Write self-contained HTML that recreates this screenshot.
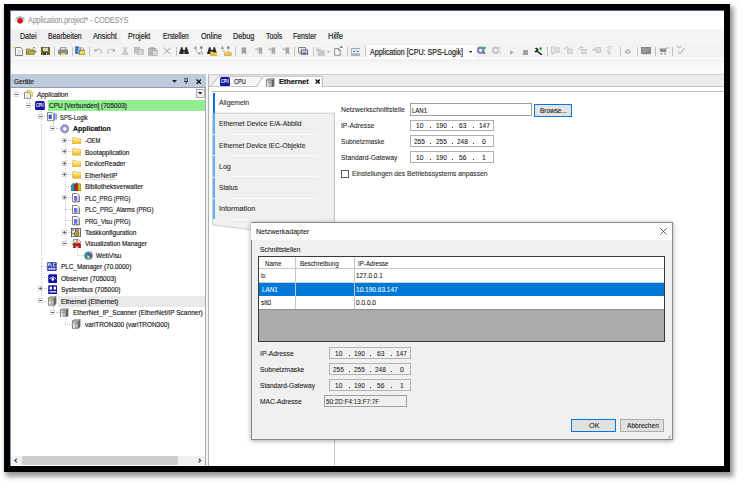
<!DOCTYPE html>
<html><head><meta charset="utf-8"><title>CODESYS</title>
<style>
html,body{margin:0;padding:0;background:#fff;}
body{width:743px;height:485px;position:relative;overflow:hidden;font-family:"Liberation Sans",sans-serif;}
.a{position:absolute;box-sizing:border-box;}
.t{position:absolute;white-space:pre;-webkit-text-stroke:.18px;line-height:12px;height:12px;transform-origin:0 50%;font-family:"Liberation Sans",sans-serif;}
#frame{position:absolute;left:4px;top:4px;width:726px;height:468px;box-sizing:border-box;border:6px solid #000;box-shadow:2px 3px 5px 1.5px rgba(0,0,0,.42);}
#clip{position:absolute;left:10px;top:10px;width:714px;height:456px;overflow:hidden;background:#fff;}
#in{position:absolute;left:-10px;top:-10px;width:743px;height:485px;}
</style></head><body>
<div id="frame"></div>
<div id="clip"><div id="in">
<div class="a" style="left:10.00px;top:10.00px;width:714.00px;height:19.00px;background:#ffffff;"></div>
<div class="a" style="left:10.00px;top:29.00px;width:714.00px;height:14.40px;background:#f0f0f0;"></div>
<div class="a" style="left:121.00px;top:29.00px;width:603.00px;height:14.40px;background:#f5f5f5;"></div>
<div class="a" style="left:10.00px;top:43.40px;width:714.00px;height:15.10px;background:#f3f3f3;"></div>
<div class="a" style="left:10.00px;top:58.50px;width:714.00px;height:16.10px;background:linear-gradient(#f1f1f1,#f9f9f9 45%,#fcfcfc);"></div>
<div class="a" style="left:10.00px;top:74.60px;width:714.00px;height:391.40px;background:#ffffff;"></div>
<svg class="a" style="left:15.20px;top:15.80px" width="10" height="8" viewBox="0 0 10 8"><path d="M5 .1 9.700 2.300V5.200L5 7.600.3 5.200V2.300z" fill="#cdd6d6"/><path d="M5 .1 9.700 2.300 5 4.200.3 2.300z" fill="#a4acac"/><circle cx="5.100" cy="4.900" r="2.700" fill="#e40a12"/></svg>
<span class="t" style="left:28.30px;top:15.25px;font-size:8.2px;color:#9a9a9a;transform:scaleX(0.8556);">Application.project* - CODESYS</span>
<span class="t" style="left:20.00px;top:30.55px;font-size:8.2px;color:#1c1c1c;transform:scaleX(0.8627);">Datei</span>
<span class="t" style="left:47.50px;top:30.55px;font-size:8.2px;color:#1c1c1c;transform:scaleX(0.8521);">Bearbeiten</span>
<span class="t" style="left:93.00px;top:30.55px;font-size:8.2px;color:#1c1c1c;transform:scaleX(0.8842);">Ansicht</span>
<span class="t" style="left:128.25px;top:30.55px;font-size:8.2px;color:#1c1c1c;transform:scaleX(0.8731);">Projekt</span>
<span class="t" style="left:163.00px;top:30.55px;font-size:8.2px;color:#1c1c1c;transform:scaleX(0.8098);">Erstellen</span>
<span class="t" style="left:200.50px;top:30.55px;font-size:8.2px;color:#1c1c1c;transform:scaleX(0.8766);">Online</span>
<span class="t" style="left:233.00px;top:30.55px;font-size:8.2px;color:#1c1c1c;transform:scaleX(0.8803);">Debug</span>
<span class="t" style="left:265.75px;top:30.55px;font-size:8.2px;color:#1c1c1c;transform:scaleX(0.8497);">Tools</span>
<span class="t" style="left:293.25px;top:30.55px;font-size:8.2px;color:#1c1c1c;transform:scaleX(0.8374);">Fenster</span>
<span class="t" style="left:328.00px;top:30.55px;font-size:8.2px;color:#1c1c1c;transform:scaleX(0.9152);">Hilfe</span>
<div class="a" style="left:54.10px;top:47.20px;width:0.60px;height:9.00px;background:#c4c4c4;"></div>
<div class="a" style="left:71.80px;top:47.20px;width:0.60px;height:9.00px;background:#c4c4c4;"></div>
<div class="a" style="left:89.00px;top:47.20px;width:0.60px;height:9.00px;background:#c4c4c4;"></div>
<div class="a" style="left:175.90px;top:47.20px;width:0.60px;height:9.00px;background:#c4c4c4;"></div>
<div class="a" style="left:235.10px;top:47.20px;width:0.60px;height:9.00px;background:#c4c4c4;"></div>
<div class="a" style="left:294.10px;top:47.20px;width:0.60px;height:9.00px;background:#c4c4c4;"></div>
<div class="a" style="left:312.60px;top:47.20px;width:0.60px;height:9.00px;background:#c4c4c4;"></div>
<div class="a" style="left:346.90px;top:47.20px;width:0.60px;height:9.00px;background:#c4c4c4;"></div>
<div class="a" style="left:365.00px;top:47.20px;width:0.60px;height:9.00px;background:#c4c4c4;"></div>
<div class="a" style="left:546.70px;top:47.20px;width:0.60px;height:9.00px;background:#c4c4c4;"></div>
<div class="a" style="left:619.70px;top:47.20px;width:0.60px;height:9.00px;background:#c4c4c4;"></div>
<div class="a" style="left:637.20px;top:47.20px;width:0.60px;height:9.00px;background:#c4c4c4;"></div>
<div class="a" style="left:654.70px;top:47.20px;width:0.60px;height:9.00px;background:#c4c4c4;"></div>
<div class="a" style="left:672.20px;top:47.20px;width:0.60px;height:9.00px;background:#c4c4c4;"></div>
<svg class="a" style="left:12.50px;top:46.00px" width="10" height="10" viewBox="0 0 10 10"><path d="M2.5 1.5h5l2 2v6h-7z" fill="#fff" stroke="#666" stroke-width=".8"/><path d="M4 4h4M4 5.4h4M4 6.8h4M4 8.2h4" stroke="#c8c8c8" stroke-width=".8"/><path d="M1.5 0 L2 1.2 3.2 1.5 2 2 1.5 3.2 1 2 0 1.5 1 1.2z" fill="#e8d020"/></svg>
<svg class="a" style="left:26.00px;top:47.00px" width="10.5" height="8" viewBox="0 0 10.5 8"><path d="M.5 7.3V2h3l1 1h3.5v1.2" fill="#d8d070" stroke="#55531a" stroke-width=".7"/><path d="M.5 7.3l2-3.3h7.5l-2 3.3z" fill="#c4bc3c" stroke="#55531a" stroke-width=".7"/><path d="M6.5 1.3c1.2-1 2.2-.8 3 .2" stroke="#333" stroke-width=".6" fill="none"/></svg>
<svg class="a" style="left:40.80px;top:46.80px" width="9" height="8.4" viewBox="0 0 9 8.4"><rect x=".4" y=".4" width="8.2" height="7.6" fill="#6e6c1c" stroke="#3e3d10" stroke-width=".6"/><rect x="2" y=".8" width="5" height="3.4" fill="#d9d9c0"/><rect x="2.4" y="5.4" width="4" height="2.6" fill="#3a3a3a"/><rect x="5" y="5.9" width="1" height="1.8" fill="#ddd"/></svg>
<svg class="a" style="left:57.80px;top:46.50px" width="10.4" height="8.8" viewBox="0 0 10.4 8.8"><path d="M2.6 3V.6h5.2V3" fill="#f4f4f4" stroke="#555" stroke-width=".6"/><rect x=".5" y="3" width="9.4" height="4" rx=".8" fill="#9a9a9a" stroke="#444" stroke-width=".6"/><rect x="2.4" y="5.6" width="5.6" height="2.8" fill="#e6dc5a" stroke="#555" stroke-width=".5"/></svg>
<svg class="a" style="left:75.00px;top:46.30px" width="10.4" height="9.2" viewBox="0 0 10.4 9.2"><rect x=".5" y=".8" width="3.2" height="6.6" fill="#3f7fd0" stroke="#1b4a94" stroke-width=".6"/><rect x="2.6" y="1.8" width="3" height="5.4" fill="#9cc0ec" stroke="#3565a8" stroke-width=".6"/><path d="M5.6 2.6c.6-1.4 2.4-1.4 3 0v1.6H5.6z" fill="#e8e8e8" stroke="#666" stroke-width=".5"/><rect x="4.6" y="4.4" width="5.4" height="4.4" fill="#f0dc50" stroke="#7a6d14" stroke-width=".6"/></svg>
<svg class="a" style="left:93.60px;top:48.40px" width="8.4" height="6" viewBox="0 0 8.4 6"><path d="M1.2 2.4C3.4.6 6.6.8 7.6 3.2 7.9 4.3 7.3 5.2 6.4 5.6" fill="none" stroke="#a8a8a8" stroke-width=".9"/><path d="M.4.6v3h3z" fill="#a8a8a8"/></svg>
<svg class="a" style="left:107.20px;top:48.40px" width="8.4" height="6" viewBox="0 0 8.4 6"><path d="M7.2 2.4C5 .6 1.8.8.8 3.2.5 4.3 1.1 5.2 2 5.6" fill="none" stroke="#a8a8a8" stroke-width=".9"/><path d="M8 .6v3h-3z" fill="#a8a8a8"/></svg>
<svg class="a" style="left:121.80px;top:46.80px" width="6.4" height="8.6" viewBox="0 0 6.4 8.6"><path d="M1.4 0 4.2 5.4M5 0 2.2 5.4" stroke="#a6a6a6" stroke-width=".8" fill="none"/><circle cx="1.6" cy="6.8" r="1.2" fill="none" stroke="#a6a6a6" stroke-width=".8"/><circle cx="4.8" cy="6.8" r="1.2" fill="none" stroke="#a6a6a6" stroke-width=".8"/></svg>
<svg class="a" style="left:134.20px;top:46.80px" width="9.8" height="8.6" viewBox="0 0 9.8 8.6"><rect x=".4" y=".4" width="5" height="5.6" fill="#c4c4c4" stroke="#a4a4a4" stroke-width=".6"/><rect x="3.8" y="2.4" width="5.4" height="5.8" fill="#d2d2d2" stroke="#a4a4a4" stroke-width=".6"/></svg>
<svg class="a" style="left:148.20px;top:46.60px" width="10" height="9" viewBox="0 0 10 9"><rect x=".4" y="1.2" width="7.6" height="7" fill="#b8b8b8" stroke="#a0a0a0" stroke-width=".6"/><rect x="2.4" y=".3" width="3.6" height="1.8" fill="#a0a0a0"/><rect x="4.4" y="3.6" width="5" height="5" fill="#d6d6d6" stroke="#a8a8a8" stroke-width=".6"/></svg>
<svg class="a" style="left:163.00px;top:47.20px" width="8.2" height="7.8" viewBox="0 0 8.2 7.8"><path d="M.6.6 7.6 7.2M7.6.6.6 7.2" stroke="#a2a2a2" stroke-width="1" fill="none"/></svg>
<svg class="a" style="left:179.30px;top:46.80px" width="10" height="7.6" viewBox="0 0 10 7.6"><path d="M1.900.3h1.600l.3 2.300 1 3.800c.1.700-.2 1-.8 1H.9c-.600 0-.9-.3-.8-1l1.300-3.800z" fill="#262626"/><path d="M6.500.3h1.600l.5 2.300 1.300 3.800c.1.700-.2 1-.8 1H6c-.600 0-.9-.3-.8-1l1-3.800z" fill="#262626"/><rect x="4" y="2.800" width="2" height="1.800" fill="#262626"/></svg>
<svg class="a" style="left:193.60px;top:46.20px" width="10" height="9.6" viewBox="0 0 10 9.6"><path d="M2.2 3.6c-.6 2 .8 3.400 2.600 3.800M6.6 2.200c1.200 1 1.400 2.400.6 3.800" fill="none" stroke="#8a8a8a" stroke-width=".7" stroke-dasharray="1 .6"/><path d="M.3 3.200 1.400.500 2.500 3.200M.8 2.300h1.300" stroke="#666" stroke-width=".6" fill="none"/><path d="M6.600.4v2.200M6.600.5h1c.8 0 .8 1 0 1h-1M6.600 1.500h1.100c.9 0 .9 1.100 0 1.100h-1.100" stroke="#555" stroke-width=".5" fill="none"/><path d="M4.4 6.600l1.600.8-1.600.8z" fill="#555"/></svg>
<svg class="a" style="left:199.40px;top:51.60px" width="4" height="3.8" viewBox="0 0 4 3.8"><rect x=".3" y=".3" width="3.2" height="3.2" fill="#ddd" stroke="#999" stroke-width=".5"/></svg>
<svg class="a" style="left:206.70px;top:46.80px" width="10" height="7.6" viewBox="0 0 10 7.6"><path d="M1.900.3h1.600l.3 2.300 1 3.800c.1.700-.2 1-.8 1H.9c-.600 0-.9-.3-.8-1l1.300-3.800z" fill="#262626"/><path d="M6.500.3h1.600l.5 2.300 1.300 3.800c.1.700-.2 1-.8 1H6c-.600 0-.9-.3-.8-1l1-3.800z" fill="#262626"/><rect x="4" y="2.800" width="2" height="1.800" fill="#262626"/></svg>
<svg class="a" style="left:209.70px;top:50.80px" width="7.6" height="4.8" viewBox="0 0 7.6 4.8"><defs><linearGradient id="fg" x1="0" y1="0" x2="0" y2="1"><stop offset="0" stop-color="#fbe88a"/><stop offset="1" stop-color="#eca818"/></linearGradient></defs><path d="M.3 4.5V.8h2.4l.6.7h4v3z" fill="url(#fg)" stroke="#b48a14" stroke-width=".4"/></svg>
<svg class="a" style="left:221.20px;top:46.20px" width="10" height="9.6" viewBox="0 0 10 9.6"><path d="M2.2 3.6c-.6 2 .8 3.400 2.600 3.800M6.6 2.200c1.200 1 1.400 2.400.6 3.800" fill="none" stroke="#8a8a8a" stroke-width=".7" stroke-dasharray="1 .6"/><path d="M.3 3.200 1.400.500 2.500 3.200M.8 2.300h1.300" stroke="#666" stroke-width=".6" fill="none"/><path d="M6.600.4v2.200M6.600.5h1c.8 0 .8 1 0 1h-1M6.600 1.500h1.100c.9 0 .9 1.100 0 1.100h-1.100" stroke="#555" stroke-width=".5" fill="none"/><path d="M4.4 6.600l1.600.8-1.600.8z" fill="#555"/></svg>
<svg class="a" style="left:224.40px;top:50.80px" width="7.6" height="4.8" viewBox="0 0 7.6 4.8"><defs><linearGradient id="fg" x1="0" y1="0" x2="0" y2="1"><stop offset="0" stop-color="#fbe88a"/><stop offset="1" stop-color="#eca818"/></linearGradient></defs><path d="M.3 4.5V.8h2.4l.6.7h4v3z" fill="url(#fg)" stroke="#b48a14" stroke-width=".4"/></svg>
<svg class="a" style="left:241.00px;top:46.80px" width="6" height="8.4" viewBox="0 0 6 8.4"><path d="M.6.4h4.6v7.4L2.9 5.6.6 7.8z" fill="#9e9e9e"/></svg>
<svg class="a" style="left:255.20px;top:46.80px" width="8" height="8.4" viewBox="0 0 8 8.4"><path d="M3.6.6h3.6v7.2L5.4 6 3.6 7.8z" fill="#a8a8a8"/><path d="M0 2.2h3M1.8.8 3.2 2.2 1.8 3.6" stroke="#a0a0a0" stroke-width=".7" fill="none"/></svg>
<svg class="a" style="left:268.20px;top:46.80px" width="8" height="8.4" viewBox="0 0 8 8.4"><path d="M3.6.6h3.6v7.2L5.4 6 3.6 7.8z" fill="#a8a8a8"/><path d="M0 2.2h3M1.8.8 3.2 2.2 1.8 3.6" stroke="#a0a0a0" stroke-width=".7" fill="none"/></svg>
<svg class="a" style="left:281.80px;top:46.80px" width="8" height="8.4" viewBox="0 0 8 8.4"><path d="M3.6.6h3.6v7.2L5.4 6 3.6 7.8z" fill="#a8a8a8"/><path d="M0 2.2h3M1.8.8 3.2 2.2 1.8 3.6" stroke="#a0a0a0" stroke-width=".7" fill="none"/></svg>
<svg class="a" style="left:298.20px;top:46.80px" width="10.2" height="8.6" viewBox="0 0 10.2 8.6"><rect x=".4" y=".4" width="7.4" height="5.6" rx=".8" fill="#e8e8e8" stroke="#444" stroke-width=".7"/><rect x="3.2" y="3" width="6.4" height="5" fill="#c8d4ea" stroke="#333" stroke-width=".7"/><rect x="4.6" y="5.6" width="3.6" height="1.6" fill="#3a5fb4"/></svg>
<svg class="a" style="left:316.30px;top:46.80px" width="9.2" height="8.8" viewBox="0 0 9.2 8.8"><path d="M.6 2.2h4v1.6h3.8v4.6H2.2V3.8H.6z" fill="#d0d0d0" stroke="#b0b0b0" stroke-width=".6"/><path d="M3.2 5h4M3.2 6.4h4" stroke="#b0b0b0" stroke-width=".5"/><path d="M1.2 0 1.6 1 2.6 1.2 1.6 1.6 1.2 2.6.8 1.6 0 1.2.8 1z" fill="#bbb"/></svg>
<svg class="a" style="left:326.80px;top:50.60px" width="3" height="2" viewBox="0 0 3 2"><path d="M0 0h3L1.5 1.8z" fill="#999"/></svg>
<svg class="a" style="left:333.60px;top:46.20px" width="9" height="9.6" viewBox="0 0 9 9.6"><path d="M.7 2.600h3.800l1.700 1.700v4.900H.7z" fill="#fff" stroke="#3a3a3a" stroke-width=".6"/><path d="M4.500 2.600v1.700h1.700" fill="none" stroke="#3a3a3a" stroke-width=".5"/><path d="M5.600 2c.5-1 1.300-1.300 2.200-1" stroke="#333" stroke-width=".6" fill="none"/><path d="M7.300.2l1.300 1.300-1.700.3z" fill="#222"/></svg>
<svg class="a" style="left:350.60px;top:46.60px" width="9.6" height="9.2" viewBox="0 0 9.6 9.2"><rect x=".4" y="1.600" width="8.800" height="7" fill="#f4f7fc" stroke="#8a8a8a" stroke-width=".6"/><path d="M1.200 1v1.200M2.600 1v1.200M4 1v1.200M5.400 1v1.200M6.800 1v1.200M8.200 1v1.200" stroke="#7a9ae0" stroke-width=".7"/><path d="M2.200 4.400h1.800M5.600 4.400h1.800" stroke="#2a50c8" stroke-width="1.300"/><rect x=".7" y="6.200" width="8.200" height="2.200" fill="#b4b4b4"/></svg>
<div class="a" style="left:367.00px;top:44.80px;width:107.50px;height:13.40px;background:#fcfcfc;"></div>
<span class="t" style="left:369.50px;top:47.05px;font-size:8.2px;color:#1a1a1a;transform:scaleX(0.8659);">Application [CPU: SPS-Logik]</span>
<svg class="a" style="left:469.30px;top:50.50px" width="3.2" height="2" viewBox="0 0 3.2 2"><path d="M0 0h3.200L1.600 1.900z" fill="#222"/></svg>
<svg class="a" style="left:477.30px;top:46.40px" width="9.6" height="9.6" viewBox="0 0 9.6 9.6"><circle cx="3.600" cy="4.200" r="2.500" fill="#fff" stroke="#7c88c6" stroke-width="1.900"/><circle cx="3.600" cy="4.200" r="3.500" fill="none" stroke="#4a568e" stroke-width=".4"/><path d="M6.200 6.200l2.200.6-1.400 1.600z" fill="#222"/><path d="M6.800 4.800v2" stroke="#333" stroke-width=".5"/><circle cx="7.500" cy="1.900" r="1.300" fill="#22c022"/></svg>
<svg class="a" style="left:491.60px;top:46.40px" width="9.6" height="9.6" viewBox="0 0 9.6 9.6"><circle cx="3.600" cy="4.200" r="2.500" fill="#fff" stroke="#c4c4c4" stroke-width="1.900"/><circle cx="3.600" cy="4.200" r="3.500" fill="none" stroke="#b0b0b0" stroke-width=".4"/><path d="M6.200 1.200h2.400v6.400H6.200z" fill="#e8e8e8" stroke="#c0c0c0" stroke-width=".4"/></svg>
<svg class="a" style="left:510.30px;top:50.10px" width="3.6" height="5" viewBox="0 0 3.6 5"><path d="M.2.200 3.400 2.500.2 4.800z" fill="#a4a4a4"/></svg>
<div class="a" style="left:522.90px;top:50.40px;width:5.10px;height:4.70px;background:#a2a2a2;"></div>
<svg class="a" style="left:533.60px;top:46.60px" width="9.4" height="8.8" viewBox="0 0 9.4 8.8"><path d="M1 1.6 2.4.4 4.6 2.6 4 4l4.4 3.6-.9 1L3 5 1.6 5.6.2 4 2 3.8 2.6 3z" fill="#1e1e1e"/><circle cx="6.6" cy="1.6" r="1.4" fill="#18b018"/></svg>
<svg class="a" style="left:550.50px;top:46.40px" width="9" height="9.2" viewBox="0 0 9 9.2"><path d="M.8.8h2.4M.8.8v6.4M.8 7.2h2.4" stroke="#b4b4b4" stroke-width=".8" fill="none"/><rect x="3.6" y="1.8" width="4.8" height="4.4" fill="#dcdcdc" stroke="#b4b4b4" stroke-width=".5"/><path d="M.2 7.4h2.2L1.3 8.8z" fill="#b4b4b4"/></svg>
<svg class="a" style="left:563.80px;top:46.40px" width="9" height="9.2" viewBox="0 0 9 9.2"><path d="M4.6 2.2C3.4.4 1.2.6.8 2.6" stroke="#b4b4b4" stroke-width=".8" fill="none"/><path d="M0 2h2L1 3.6z" fill="#b4b4b4"/><rect x="3.6" y="3" width="4.8" height="4.4" fill="#dcdcdc" stroke="#b4b4b4" stroke-width=".5"/></svg>
<svg class="a" style="left:577.50px;top:46.40px" width="9" height="9.2" viewBox="0 0 9 9.2"><path d="M.8 3.6C.8 1.2 3 .6 4.4 1.6" stroke="#b4b4b4" stroke-width=".8" fill="none"/><path d="M3.8.4 5.6 1.6 3.8 2.8z" fill="#b4b4b4"/><rect x="3.6" y="3.4" width="4.8" height="4.2" fill="#dcdcdc" stroke="#b4b4b4" stroke-width=".5"/></svg>
<svg class="a" style="left:591.60px;top:46.40px" width="9" height="9.2" viewBox="0 0 9 9.2"><path d="M.2 3.6h3M2 2.2 3.4 3.6 2 5" stroke="#b4b4b4" stroke-width=".8" fill="none"/><rect x="4.2" y="1.4" width="4.4" height="5.4" fill="#dcdcdc" stroke="#b4b4b4" stroke-width=".5"/></svg>
<svg class="a" style="left:605.60px;top:46.40px" width="9" height="9.2" viewBox="0 0 9 9.2"><path d="M1.2 1.6C2.4-.2 5.2.2 4.8 2.2 4.4 3.6 1.4 3.4 1.6 5.2 1.8 7 4.6 7 5 5.6" stroke="#b4b4b4" stroke-width=".8" fill="none"/><path d="M2 8.6h2.4L3.2 7z" fill="#b4b4b4"/></svg>
<svg class="a" style="left:624.60px;top:48.60px" width="6" height="5.4" viewBox="0 0 6 5.4"><path d="M.4 1.8h2.4V.4L5.6 2.7 2.8 5V3.6H.4z" fill="#e8e8e8" stroke="#8c8c8c" stroke-width=".7"/></svg>
<svg class="a" style="left:640.60px;top:46.60px" width="10.4" height="8.8" viewBox="0 0 10.4 8.8"><rect x=".4" y=".4" width="9.4" height="6.2" fill="#8c8c8c" stroke="#6a6a6a" stroke-width=".6"/><path d="M1 6 9 1M1 3.2 5 1" stroke="#c0c0c0" stroke-width=".6"/><path d="M2 8h6.4" stroke="#8c8c8c" stroke-width=".9" stroke-dasharray="1 .5"/></svg>
<svg class="a" style="left:658.60px;top:47.40px" width="9.6" height="8" viewBox="0 0 9.6 8"><path d="M.4 1.6h6.8V5H1.6z" fill="#8a8a8a"/><path d="M7 1.6 9.2.4" stroke="#8a8a8a" stroke-width=".8"/><circle cx="2.4" cy="6.6" r=".9" fill="#8a8a8a"/><circle cx="6" cy="6.6" r=".9" fill="#8a8a8a"/></svg>
<svg class="a" style="left:676.00px;top:46.40px" width="9.2" height="9" viewBox="0 0 9.2 9"><path d="M.4 1h4.2M3.4.2 4.8 1 3.4 2" stroke="#a8a8a8" stroke-width=".7" fill="none"/><path d="M2 5.4 4 8 8.4 2.2" stroke="#a0a0a0" stroke-width=".9" fill="none"/></svg>
<div class="a" style="left:10.00px;top:74.30px;width:195.60px;height:13.20px;background:#bdcbdc;"></div>
<div class="a" style="left:10.00px;top:87.40px;width:195.60px;height:0.70px;background:#8e9aac;"></div>
<span class="t" style="left:14.00px;top:75.85px;font-size:7.5px;color:#1e1e1e;transform:scaleX(0.8676);">Geräte</span>
<svg class="a" style="left:171.60px;top:80.00px" width="5" height="3" viewBox="0 0 5 3"><path d="M0 0h5L2.5 2.8z" fill="#1e1e1e"/></svg>
<svg class="a" style="left:183.80px;top:78.40px" width="4.4" height="6.2" viewBox="0 0 4.4 6.2"><rect x=".9" y=".4" width="2.6" height="3" fill="#bdcbdc" stroke="#222" stroke-width=".7"/><path d="M.2 3.6h4M2.2 3.6v2.4" stroke="#222" stroke-width=".7"/></svg>
<svg class="a" style="left:195.60px;top:78.80px" width="5.6" height="5.4" viewBox="0 0 5.6 5.4"><path d="M.5.5 5 4.9M5 .5.5 4.9" stroke="#111" stroke-width="1.3"/></svg>
<div class="a" style="left:204.80px;top:87.60px;width:0.80px;height:378.40px;background:#a8a8a8;"></div>
<div class="a" style="left:205.60px;top:74.60px;width:2.40px;height:391.40px;background:#f4f4f4;"></div>
<div class="a" style="left:10.00px;top:10.00px;width:0.70px;height:456.00px;background:#8492b4;"></div>
<div class="a" style="left:10.00px;top:10.00px;width:714.00px;height:0.80px;background:#4c68a2;"></div>
<div class="a" style="left:196.00px;top:88.60px;width:8.60px;height:9.60px;background:#ececec;border:.6px solid #adadad;"></div>
<svg class="a" style="left:198.20px;top:92.40px" width="4.4" height="2.6" viewBox="0 0 4.4 2.6"><path d="M0 0h4.4L2.2 2.4z" fill="#222"/></svg>
<div class="a" style="left:10.60px;top:455.60px;width:194.20px;height:9.80px;background:#f0f0f0;"></div>
<div class="a" style="left:22.00px;top:455.60px;width:156.40px;height:9.80px;background:#cdcdcd;"></div>
<svg class="a" style="left:13.60px;top:458.00px" width="3.6" height="5" viewBox="0 0 3.6 5"><path d="M2.800.700.900 2.500 2.800 4.300" stroke="#444" stroke-width="1.200" fill="none"/></svg>
<svg class="a" style="left:197.60px;top:458.00px" width="3.6" height="5" viewBox="0 0 3.6 5"><path d="M.8.700 2.700 2.500.8 4.300" stroke="#444" stroke-width="1.200" fill="none"/></svg>
<div class="a" style="left:48.40px;top:100.00px;width:156.40px;height:11.10px;background:#90ee90;"></div>
<div class="a" style="left:58.40px;top:295.85px;width:146.40px;height:11.20px;background:#e9e9e9;"></div>
<svg class="a" style="left:13.90px;top:91.80px" width="5.2" height="5" viewBox="0 0 5.2 5"><rect x=".35" y=".35" width="4.5" height="4.3" fill="#fff" stroke="#b4c0c0" stroke-width=".6"/><path d="M1 2.500h3.200" stroke="#5a5a5a" stroke-width=".95"/></svg>
<div class="a" style="left:19.60px;top:94.00px;width:5.40px;height:0.60px;border-top:.6px dotted #cacaca;"></div>
<svg class="a" style="left:24.40px;top:90.10px" width="9" height="9.2" viewBox="0 0 9 9.2"><path d="M2.800.5h3.200c1.600.3 2.600 1.600 2.600 3.200v2.600H5.400z" fill="#f2e270" stroke="#a89a30" stroke-width=".5"/><path d="M.5 2.400h4l2 2v4.300H.5z" fill="#fff" stroke="#5a5a5a" stroke-width=".7"/><path d="M1.600 4.600h3.600M1.600 6h3.600M1.600 7.400h3.600" stroke="#c0c0c0" stroke-width=".6"/></svg>
<span class="t" style="left:36.90px;top:89.15px;font-size:7.5px;color:#1e1e1e;font-style:italic;transform:scaleX(0.8473);">Application</span>
<div class="a" style="left:29.00px;top:99.90px;width:0.60px;height:2.97px;border-left:.6px dotted #cacaca;"></div>
<svg class="a" style="left:25.95px;top:102.78px" width="5.2" height="5" viewBox="0 0 5.2 5"><rect x=".35" y=".35" width="4.5" height="4.3" fill="#fff" stroke="#b4c0c0" stroke-width=".6"/><path d="M1 2.500h3.200" stroke="#5a5a5a" stroke-width=".95"/></svg>
<svg class="a" style="left:35.00px;top:100.77px" width="9.8" height="9.4" viewBox="0 0 9.8 9.4"><rect x="0" y="0" width="9.8" height="9.4" rx="2" fill="#1414a4"/><text x="4.9" y="6.2" font-family="Liberation Sans" font-size="4.6" font-weight="bold" fill="#fff" text-anchor="middle" textLength="7.800000000000001" lengthAdjust="spacingAndGlyphs">CPU</text></svg>
<span class="t" style="left:49.20px;top:100.42px;font-size:7.5px;color:#1e1e1e;transform:scaleX(0.8620);">CPU [Verbunden] (705003)</span>
<div class="a" style="left:41.20px;top:110.88px;width:0.60px;height:187.57px;border-left:.6px dotted #cacaca;"></div>
<div class="a" style="left:31.60px;top:104.97px;width:3.40px;height:0.60px;border-top:.6px dotted #cacaca;"></div>
<svg class="a" style="left:38.00px;top:113.85px" width="5.2" height="5" viewBox="0 0 5.2 5"><rect x=".35" y=".35" width="4.5" height="4.3" fill="#fff" stroke="#b4c0c0" stroke-width=".6"/><path d="M1 2.500h3.200" stroke="#5a5a5a" stroke-width=".95"/></svg>
<div class="a" style="left:43.80px;top:116.05px;width:3.20px;height:0.60px;border-top:.6px dotted #cacaca;"></div>
<svg class="a" style="left:47.20px;top:112.35px" width="10.4" height="9.2" viewBox="0 0 10.4 9.2"><path d="M.5.5h4.6l1.6 1.6v6.6H.5z" fill="#fff" stroke="#555" stroke-width=".7"/><rect x="1.6" y="2.6" width="3.2" height="4.4" fill="#3a5ad0"/><path d="M7.6 1v7.4M9.2 1.6v6" stroke="#5a78e8" stroke-width="1.1"/></svg>
<span class="t" style="left:60.40px;top:111.60px;font-size:7.5px;color:#1e1e1e;transform:scaleX(0.7817);">SPS-Logik</span>
<div class="a" style="left:53.20px;top:121.95px;width:0.60px;height:3.87px;border-left:.6px dotted #cacaca;"></div>
<div class="a" style="left:55.60px;top:127.92px;width:4.00px;height:0.60px;border-top:.6px dotted #cacaca;"></div>
<svg class="a" style="left:50.05px;top:125.72px" width="5.2" height="5" viewBox="0 0 5.2 5"><rect x=".35" y=".35" width="4.5" height="4.3" fill="#fff" stroke="#b4c0c0" stroke-width=".6"/><path d="M1 2.500h3.200" stroke="#5a5a5a" stroke-width=".95"/></svg>
<svg class="a" style="left:59.80px;top:124.02px" width="9.6" height="9.6" viewBox="0 0 9.6 9.6"><circle cx="4.8" cy="4.8" r="3.100" fill="#fff" stroke="#9696d2" stroke-width="2.500"/><circle cx="4.8" cy="4.8" r="4.400" fill="none" stroke="#6a6a8e" stroke-width=".45" stroke-dasharray="1.500 .8"/></svg>
<span class="t" style="left:73.00px;top:123.37px;font-size:7.5px;color:#111;font-weight:bold;transform:scaleX(0.9255);">Application</span>
<div class="a" style="left:65.00px;top:133.82px;width:0.60px;height:106.85px;border-left:.6px dotted #cacaca;"></div>
<svg class="a" style="left:62.10px;top:137.70px" width="5.2" height="5" viewBox="0 0 5.2 5"><rect x=".35" y=".35" width="4.5" height="4.3" fill="#fff" stroke="#b4c0c0" stroke-width=".6"/><path d="M1 2.500h3.200" stroke="#5a5a5a" stroke-width=".95"/><path d="M2.600 1v3" stroke="#5a5a5a" stroke-width=".8"/></svg>
<div class="a" style="left:67.80px;top:139.90px;width:3.20px;height:0.60px;border-top:.6px dotted #cacaca;"></div>
<svg class="a" style="left:71.60px;top:136.60px" width="9.4" height="7.6" viewBox="0 0 9.4 7.6"><defs><linearGradient id="fo" x1="0" y1="0" x2="0" y2="1"><stop offset="0" stop-color="#fff0a0"/><stop offset=".45" stop-color="#fbd850"/><stop offset="1" stop-color="#eebc34"/></linearGradient></defs><path d="M.4 6.400V1.500C.4.900.9.400 1.500.400h2c.5 0 .8.200 1 .600l.4.700h3.200c.5 0 .9.400.9.900v3.800c0 .5-.4.800-.8.800H1.200c-.5 0-.8-.3-.8-.8z" fill="url(#fo)" stroke="#c09428" stroke-width=".5"/><path d="M1.200 2.600h7" stroke="#fffbe0" stroke-width=".7" opacity=".9"/></svg>
<span class="t" style="left:84.60px;top:135.35px;font-size:7.5px;color:#1e1e1e;transform:scaleX(0.7911);">-OEM</span>
<svg class="a" style="left:62.10px;top:149.18px" width="5.2" height="5" viewBox="0 0 5.2 5"><rect x=".35" y=".35" width="4.5" height="4.3" fill="#fff" stroke="#b4c0c0" stroke-width=".6"/><path d="M1 2.500h3.200" stroke="#5a5a5a" stroke-width=".95"/><path d="M2.600 1v3" stroke="#5a5a5a" stroke-width=".8"/></svg>
<div class="a" style="left:67.80px;top:151.38px;width:3.20px;height:0.60px;border-top:.6px dotted #cacaca;"></div>
<svg class="a" style="left:71.60px;top:148.07px" width="9.4" height="7.6" viewBox="0 0 9.4 7.6"><defs><linearGradient id="fo" x1="0" y1="0" x2="0" y2="1"><stop offset="0" stop-color="#fff0a0"/><stop offset=".45" stop-color="#fbd850"/><stop offset="1" stop-color="#eebc34"/></linearGradient></defs><path d="M.4 6.400V1.500C.4.900.9.400 1.500.400h2c.5 0 .8.200 1 .600l.4.700h3.200c.5 0 .9.400.9.900v3.800c0 .5-.4.800-.8.800H1.200c-.5 0-.8-.3-.8-.8z" fill="url(#fo)" stroke="#c09428" stroke-width=".5"/><path d="M1.200 2.600h7" stroke="#fffbe0" stroke-width=".7" opacity=".9"/></svg>
<span class="t" style="left:84.60px;top:146.83px;font-size:7.5px;color:#1e1e1e;transform:scaleX(0.8675);">Bootapplication</span>
<svg class="a" style="left:62.10px;top:160.65px" width="5.2" height="5" viewBox="0 0 5.2 5"><rect x=".35" y=".35" width="4.5" height="4.3" fill="#fff" stroke="#b4c0c0" stroke-width=".6"/><path d="M1 2.500h3.200" stroke="#5a5a5a" stroke-width=".95"/><path d="M2.600 1v3" stroke="#5a5a5a" stroke-width=".8"/></svg>
<div class="a" style="left:67.80px;top:162.85px;width:3.20px;height:0.60px;border-top:.6px dotted #cacaca;"></div>
<svg class="a" style="left:71.60px;top:159.55px" width="9.4" height="7.6" viewBox="0 0 9.4 7.6"><defs><linearGradient id="fo" x1="0" y1="0" x2="0" y2="1"><stop offset="0" stop-color="#fff0a0"/><stop offset=".45" stop-color="#fbd850"/><stop offset="1" stop-color="#eebc34"/></linearGradient></defs><path d="M.4 6.400V1.500C.4.900.9.400 1.500.400h2c.5 0 .8.200 1 .600l.4.700h3.200c.5 0 .9.400.9.900v3.800c0 .5-.4.800-.8.800H1.200c-.5 0-.8-.3-.8-.8z" fill="url(#fo)" stroke="#c09428" stroke-width=".5"/><path d="M1.200 2.600h7" stroke="#fffbe0" stroke-width=".7" opacity=".9"/></svg>
<span class="t" style="left:84.60px;top:158.30px;font-size:7.5px;color:#1e1e1e;transform:scaleX(0.8500);">DeviceReader</span>
<svg class="a" style="left:62.10px;top:172.13px" width="5.2" height="5" viewBox="0 0 5.2 5"><rect x=".35" y=".35" width="4.5" height="4.3" fill="#fff" stroke="#b4c0c0" stroke-width=".6"/><path d="M1 2.500h3.200" stroke="#5a5a5a" stroke-width=".95"/><path d="M2.600 1v3" stroke="#5a5a5a" stroke-width=".8"/></svg>
<div class="a" style="left:67.80px;top:174.33px;width:3.20px;height:0.60px;border-top:.6px dotted #cacaca;"></div>
<svg class="a" style="left:71.60px;top:171.03px" width="9.4" height="7.6" viewBox="0 0 9.4 7.6"><defs><linearGradient id="fo" x1="0" y1="0" x2="0" y2="1"><stop offset="0" stop-color="#fff0a0"/><stop offset=".45" stop-color="#fbd850"/><stop offset="1" stop-color="#eebc34"/></linearGradient></defs><path d="M.4 6.400V1.500C.4.900.9.400 1.500.400h2c.5 0 .8.200 1 .600l.4.700h3.200c.5 0 .9.400.9.900v3.800c0 .5-.4.800-.8.800H1.200c-.5 0-.8-.3-.8-.8z" fill="url(#fo)" stroke="#c09428" stroke-width=".5"/><path d="M1.200 2.600h7" stroke="#fffbe0" stroke-width=".7" opacity=".9"/></svg>
<span class="t" style="left:84.60px;top:169.78px;font-size:7.5px;color:#1e1e1e;transform:scaleX(0.8831);text-decoration:underline dotted #b4b4b4;text-decoration-thickness:.5px;">EtherNetIP</span>
<div class="a" style="left:65.20px;top:185.80px;width:5.80px;height:0.60px;border-top:.6px dotted #cacaca;"></div>
<svg class="a" style="left:71.00px;top:181.60px" width="10.4" height="9.6" viewBox="0 0 10.4 9.6"><path d="M.4 9.200V3.200L2.400 1.200l1.600 1v7z" fill="#18a0a8" stroke="#0a3a40" stroke-width=".5"/><path d="M3.800 9.200V2.200L5.600.8l1.400 1.200v7.200z" fill="#e01818" stroke="#500808" stroke-width=".5"/><path d="M6.800 9.200V2.600L8.600 1.400l1.400 1v6.800z" fill="#c8c020" stroke="#4a4808" stroke-width=".5"/></svg>
<span class="t" style="left:84.60px;top:181.25px;font-size:7.5px;color:#1e1e1e;transform:scaleX(0.8695);">Bibliotheksverwalter</span>
<svg class="a" style="left:62.10px;top:195.08px" width="5.2" height="5" viewBox="0 0 5.2 5"><rect x=".35" y=".35" width="4.5" height="4.3" fill="#fff" stroke="#b4c0c0" stroke-width=".6"/><path d="M1 2.500h3.200" stroke="#5a5a5a" stroke-width=".95"/><path d="M2.600 1v3" stroke="#5a5a5a" stroke-width=".8"/></svg>
<div class="a" style="left:67.80px;top:197.28px;width:3.20px;height:0.60px;border-top:.6px dotted #cacaca;"></div>
<svg class="a" style="left:72.20px;top:193.07px" width="8.6" height="9.8" viewBox="0 0 8.6 9.8"><path d="M1 1.200h4.800l2 2v6H1z" fill="#888"/><path d="M.5.500h4.600l2 2v6.200H.5z" fill="#fff" stroke="#4a4a4a" stroke-width=".7"/><path d="M2 3h2.600l.8.800v4H2z" fill="#6c6cf6"/></svg>
<span class="t" style="left:84.60px;top:192.73px;font-size:7.5px;color:#1e1e1e;transform:scaleX(0.7779);">PLC_PRG (PRG)</span>
<div class="a" style="left:65.20px;top:208.75px;width:5.80px;height:0.60px;border-top:.6px dotted #cacaca;"></div>
<svg class="a" style="left:72.20px;top:204.55px" width="8.6" height="9.8" viewBox="0 0 8.6 9.8"><path d="M1 1.200h4.800l2 2v6H1z" fill="#888"/><path d="M.5.500h4.600l2 2v6.200H.5z" fill="#fff" stroke="#4a4a4a" stroke-width=".7"/><path d="M2 3h2.600l.8.800v4H2z" fill="#6c6cf6"/></svg>
<span class="t" style="left:84.60px;top:204.20px;font-size:7.5px;color:#1e1e1e;transform:scaleX(0.7967);">PLC_PRG_Alarms (PRG)</span>
<div class="a" style="left:65.20px;top:220.22px;width:5.80px;height:0.60px;border-top:.6px dotted #cacaca;"></div>
<svg class="a" style="left:72.20px;top:216.02px" width="8.6" height="9.8" viewBox="0 0 8.6 9.8"><path d="M1 1.200h4.800l2 2v6H1z" fill="#888"/><path d="M.5.500h4.600l2 2v6.200H.5z" fill="#fff" stroke="#4a4a4a" stroke-width=".7"/><path d="M2 3h2.600l.8.800v4H2z" fill="#6c6cf6"/></svg>
<span class="t" style="left:84.60px;top:215.68px;font-size:7.5px;color:#1e1e1e;transform:scaleX(0.7798);">PRG_Visu (PRG)</span>
<svg class="a" style="left:62.10px;top:229.50px" width="5.2" height="5" viewBox="0 0 5.2 5"><rect x=".35" y=".35" width="4.5" height="4.3" fill="#fff" stroke="#b4c0c0" stroke-width=".6"/><path d="M1 2.500h3.200" stroke="#5a5a5a" stroke-width=".95"/><path d="M2.600 1v3" stroke="#5a5a5a" stroke-width=".8"/></svg>
<div class="a" style="left:67.80px;top:231.70px;width:3.20px;height:0.60px;border-top:.6px dotted #cacaca;"></div>
<svg class="a" style="left:71.20px;top:227.70px" width="10" height="9.4" viewBox="0 0 10 9.4"><rect x=".4" y=".5" width="9" height="8.300" fill="#ececec" stroke="#2e2e2e" stroke-width=".7"/><rect x="1.400" y="1.400" width="1.600" height="1.600" fill="#20b020"/><rect x="4" y="1.200" width="1.400" height="2" fill="#c01818"/><rect x="6.400" y="1.200" width="1.400" height="2" fill="#c01818"/><circle cx="5.600" cy="5.800" r="2.300" fill="#d2cc28" stroke="#2e2e10" stroke-width=".7"/><circle cx="5.600" cy="5.800" r=".8" fill="#4a4a18"/><path d="M1.200 5.200 3 6.200" stroke="#222" stroke-width=".7"/></svg>
<span class="t" style="left:84.60px;top:227.15px;font-size:7.5px;color:#1e1e1e;transform:scaleX(0.8805);">Taskkonfiguration</span>
<svg class="a" style="left:62.10px;top:240.57px" width="5.2" height="5" viewBox="0 0 5.2 5"><rect x=".35" y=".35" width="4.5" height="4.3" fill="#fff" stroke="#b4c0c0" stroke-width=".6"/><path d="M1 2.500h3.200" stroke="#5a5a5a" stroke-width=".95"/></svg>
<div class="a" style="left:67.80px;top:242.77px;width:3.20px;height:0.60px;border-top:.6px dotted #cacaca;"></div>
<svg class="a" style="left:71.60px;top:238.57px" width="9.6" height="9.6" viewBox="0 0 9.6 9.6"><path d="M1.800.5h4.600l2.400 2.400v6.200H1.800z" fill="#fff" stroke="#3a3a3a" stroke-width=".6"/><path d="M1.400 9V5.200l1.400-1.400h1.200l1 1.200 1-1.200h1.200l1.400 1.400V9H6.600V6.600L5 7.800 3.400 6.600V9z" fill="#c41414" stroke="#5a0808" stroke-width=".3"/><rect x="4" y="1.400" width="2" height="2" fill="#e83020"/><rect x="4.400" y="1.800" width="1.200" height="1" fill="#ffe060"/><rect x=".2" y="4.400" width="1.600" height="1.600" fill="#28a428"/></svg>
<span class="t" style="left:84.60px;top:238.22px;font-size:7.5px;color:#1e1e1e;transform:scaleX(0.8404);">Visualization Manager</span>
<div class="a" style="left:77.00px;top:248.67px;width:0.60px;height:6.88px;border-left:.6px dotted #cacaca;"></div>
<div class="a" style="left:77.20px;top:254.65px;width:6.80px;height:0.60px;border-top:.6px dotted #cacaca;"></div>
<svg class="a" style="left:84.30px;top:250.95px" width="9.4" height="9" viewBox="0 0 9.4 9"><ellipse cx="4.500" cy="4.700" rx="4.100" ry="3.900" fill="#2c7ce0" stroke="#6ab0f0" stroke-width=".5"/><rect x="1.600" y="2.600" width="2.400" height="2.600" fill="#30b030"/><rect x="5.600" y="2.800" width="2.200" height="3.600" fill="#e02818"/><rect x="3.400" y="5" width="2.200" height="2.600" fill="#f0e020"/><path d="M5 .8 8.200.2 7 2z" fill="#7cc4f8"/></svg>
<span class="t" style="left:96.30px;top:250.10px;font-size:7.5px;color:#1e1e1e;transform:scaleX(0.8538);">WebVisu</span>
<div class="a" style="left:41.40px;top:265.52px;width:5.60px;height:0.60px;border-top:.6px dotted #cacaca;"></div>
<div class="a" style="left:41.40px;top:277.40px;width:5.60px;height:0.60px;border-top:.6px dotted #cacaca;"></div>
<div class="a" style="left:43.80px;top:288.48px;width:3.20px;height:0.60px;border-top:.6px dotted #cacaca;"></div>
<div class="a" style="left:43.80px;top:300.55px;width:3.20px;height:0.60px;border-top:.6px dotted #cacaca;"></div>
<svg class="a" style="left:47.30px;top:262.02px" width="9.8" height="9.4" viewBox="0 0 9.8 9.4"><rect x=".3" y=".3" width="9.200" height="8.800" rx="1" fill="#2c40b4" stroke="#1a2a8a" stroke-width=".4"/><path d="M1.400 4.200V1.400h1.200v1.400H1.400M3.800 1.400v2.800h1.400M8.200 1.400H6.600v2.800h1.600" stroke="#fff" stroke-width=".75" fill="none"/><rect x="1.200" y="5.800" width="7.400" height="2" fill="#8c9ce0"/><path d="M1.800 6.800h1.400M4.200 6.800h1.400M6.600 6.800H8" stroke="#fff" stroke-width="1"/></svg>
<span class="t" style="left:60.70px;top:260.97px;font-size:7.5px;color:#1e1e1e;transform:scaleX(0.8515);">PLC_Manager (70.0000)</span>
<svg class="a" style="left:47.60px;top:273.50px" width="9.6" height="9.4" viewBox="0 0 9.6 9.4"><rect x=".2" y=".2" width="9.2" height="9" rx="1.6" fill="#10109c"/><path d="M1.6 5.2c1.6-2.8 4.8-2.8 6.4 0" stroke="#fff" stroke-width="1" fill="none"/><circle cx="4.8" cy="5.4" r="1.3" fill="#fff"/></svg>
<span class="t" style="left:60.70px;top:272.85px;font-size:7.5px;color:#1e1e1e;transform:scaleX(0.8784);">Observer (705003)</span>
<svg class="a" style="left:38.00px;top:286.27px" width="5.2" height="5" viewBox="0 0 5.2 5"><rect x=".35" y=".35" width="4.5" height="4.3" fill="#fff" stroke="#b4c0c0" stroke-width=".6"/><path d="M1 2.500h3.200" stroke="#5a5a5a" stroke-width=".95"/><path d="M2.600 1v3" stroke="#5a5a5a" stroke-width=".8"/></svg>
<svg class="a" style="left:47.60px;top:284.57px" width="9.6" height="9.4" viewBox="0 0 9.6 9.4"><rect x=".2" y=".2" width="9.2" height="9" rx="1.2" fill="#10109c"/><rect x="1.6" y="1.6" width="2.4" height="3" fill="#fff"/><rect x="5.6" y="1.6" width="2.4" height="3" fill="#fff"/><path d="M1.4 6.8h6.8" stroke="#fff" stroke-width="1.2"/></svg>
<span class="t" style="left:60.70px;top:283.93px;font-size:7.5px;color:#1e1e1e;transform:scaleX(0.8598);">Systembus (705000)</span>
<svg class="a" style="left:38.00px;top:298.35px" width="5.2" height="5" viewBox="0 0 5.2 5"><rect x=".35" y=".35" width="4.5" height="4.3" fill="#fff" stroke="#b4c0c0" stroke-width=".6"/><path d="M1 2.500h3.200" stroke="#5a5a5a" stroke-width=".95"/></svg>
<svg class="a" style="left:48.20px;top:296.35px" width="8.8" height="9.6" viewBox="0 0 8.8 9.6"><defs><linearGradient id="dv" x1="0" y1="0" x2="1" y2="0"><stop offset="0" stop-color="#f2f2f2"/><stop offset=".55" stop-color="#d0d0d0"/><stop offset="1" stop-color="#8c8c8c"/></linearGradient></defs><path d="M.5 2 2.200.5h6L6.500 2z" fill="#f4f4f4" stroke="#555" stroke-width=".45"/><path d="M6.500 2 8.200.5v7.200L6.500 9.200z" fill="#6a6a6a" stroke="#444" stroke-width=".3"/><rect x=".5" y="2" width="6" height="7.200" fill="url(#dv)" stroke="#484848" stroke-width=".6"/><path d="M3.600 2.300v6.700" stroke="#7a7a7a" stroke-width=".45"/><rect x="1.600" y="3.600" width="1.300" height="1.300" fill="#20c020"/><rect x="4.400" y="3.700" width="1" height="1" fill="#d83a3a"/></svg>
<span class="t" style="left:60.70px;top:296.00px;font-size:7.5px;color:#1e1e1e;transform:scaleX(0.8982);">Ethernet (Ethernet)</span>
<div class="a" style="left:53.20px;top:306.45px;width:0.60px;height:3.48px;border-left:.6px dotted #cacaca;"></div>
<div class="a" style="left:55.60px;top:312.03px;width:4.40px;height:0.60px;border-top:.6px dotted #cacaca;"></div>
<svg class="a" style="left:50.05px;top:309.82px" width="5.2" height="5" viewBox="0 0 5.2 5"><rect x=".35" y=".35" width="4.5" height="4.3" fill="#fff" stroke="#b4c0c0" stroke-width=".6"/><path d="M1 2.500h3.200" stroke="#5a5a5a" stroke-width=".95"/></svg>
<svg class="a" style="left:60.40px;top:307.82px" width="8.8" height="9.6" viewBox="0 0 8.8 9.6"><defs><linearGradient id="dv" x1="0" y1="0" x2="1" y2="0"><stop offset="0" stop-color="#f2f2f2"/><stop offset=".55" stop-color="#d0d0d0"/><stop offset="1" stop-color="#8c8c8c"/></linearGradient></defs><path d="M.5 2 2.200.5h6L6.500 2z" fill="#f4f4f4" stroke="#555" stroke-width=".45"/><path d="M6.500 2 8.200.5v7.200L6.500 9.200z" fill="#6a6a6a" stroke="#444" stroke-width=".3"/><rect x=".5" y="2" width="6" height="7.200" fill="url(#dv)" stroke="#484848" stroke-width=".6"/><path d="M3.600 2.300v6.700" stroke="#7a7a7a" stroke-width=".45"/><rect x="1.600" y="3.600" width="1.300" height="1.300" fill="#20c020"/><rect x="4.400" y="3.700" width="1" height="1" fill="#d83a3a"/></svg>
<span class="t" style="left:72.60px;top:307.48px;font-size:7.5px;color:#1e1e1e;transform:scaleX(0.8729);">EtherNet_IP_Scanner (EtherNet/IP Scanner)</span>
<div class="a" style="left:65.00px;top:317.93px;width:0.60px;height:6.47px;border-left:.6px dotted #cacaca;"></div>
<div class="a" style="left:65.20px;top:323.50px;width:6.80px;height:0.60px;border-top:.6px dotted #cacaca;"></div>
<svg class="a" style="left:72.40px;top:319.30px" width="8.8" height="9.6" viewBox="0 0 8.8 9.6"><defs><linearGradient id="dv" x1="0" y1="0" x2="1" y2="0"><stop offset="0" stop-color="#f2f2f2"/><stop offset=".55" stop-color="#d0d0d0"/><stop offset="1" stop-color="#8c8c8c"/></linearGradient></defs><path d="M.5 2 2.200.5h6L6.500 2z" fill="#f4f4f4" stroke="#555" stroke-width=".45"/><path d="M6.500 2 8.200.5v7.200L6.500 9.200z" fill="#6a6a6a" stroke="#444" stroke-width=".3"/><rect x=".5" y="2" width="6" height="7.200" fill="url(#dv)" stroke="#484848" stroke-width=".6"/><path d="M3.600 2.300v6.700" stroke="#7a7a7a" stroke-width=".45"/><rect x="1.600" y="3.600" width="1.300" height="1.300" fill="#20c020"/><rect x="4.400" y="3.700" width="1" height="1" fill="#d83a3a"/></svg>
<span class="t" style="left:84.60px;top:318.95px;font-size:7.5px;color:#1e1e1e;transform:scaleX(0.8544);">variTRON300 (variTRON300)</span>
<div class="a" style="left:208.00px;top:74.60px;width:516.00px;height:12.40px;background:#ececec;"></div>
<div class="a" style="left:208.00px;top:74.30px;width:516.00px;height:0.60px;background:#cfcfcf;"></div>
<div class="a" style="left:208.00px;top:74.60px;width:0.60px;height:391.40px;background:#b0b0b0;"></div>
<div class="a" style="left:208.60px;top:86.30px;width:515.40px;height:0.70px;background:#c6c6c6;"></div>
<div class="a" style="left:208.60px;top:87.30px;width:515.40px;height:378.70px;background:#ffffff;"></div>
<div class="a" style="left:211.60px;top:90.90px;width:512.40px;height:1.50px;background:#c0c0c0;"></div>
<svg class="a" style="left:208.00px;top:75.00px" width="120" height="12.4" viewBox="0 0 120 12.4"><path d="M2.4 11.8 10.6 1.2H50c2 0 3 .8 3.6 2L57 11.8z" fill="#f6f6f6" stroke="#a4a4a4" stroke-width=".7"/><path d="M48 12.2 54.6 2.6c.6-1 1.4-1.4 2.4-1.4H113c.9 0 1.5.6 1.5 1.5v9.5z" fill="#fff" stroke="#9a9a9a" stroke-width=".7"/><path d="M48.4 12.1h66" stroke="#fff" stroke-width="1"/></svg>
<svg class="a" style="left:220.20px;top:76.90px" width="10" height="9.6" viewBox="0 0 10 9.6"><rect x="0" y="0" width="10" height="9.6" rx="2" fill="#1414a4"/><text x="5.0" y="6.3" font-family="Liberation Sans" font-size="4.6" font-weight="bold" fill="#fff" text-anchor="middle" textLength="8" lengthAdjust="spacingAndGlyphs">CPU</text></svg>
<span class="t" style="left:234.30px;top:76.15px;font-size:7.9px;color:#1a1a1a;transform:scaleX(0.7138);">CPU</span>
<svg class="a" style="left:266.00px;top:77.60px" width="8.8" height="9.6" viewBox="0 0 8.8 9.6"><defs><linearGradient id="dv" x1="0" y1="0" x2="1" y2="0"><stop offset="0" stop-color="#f2f2f2"/><stop offset=".55" stop-color="#d0d0d0"/><stop offset="1" stop-color="#8c8c8c"/></linearGradient></defs><path d="M.5 2 2.200.5h6L6.500 2z" fill="#f4f4f4" stroke="#555" stroke-width=".45"/><path d="M6.500 2 8.200.5v7.200L6.500 9.200z" fill="#6a6a6a" stroke="#444" stroke-width=".3"/><rect x=".5" y="2" width="6" height="7.200" fill="url(#dv)" stroke="#484848" stroke-width=".6"/><path d="M3.600 2.300v6.700" stroke="#7a7a7a" stroke-width=".45"/><rect x="1.600" y="3.600" width="1.300" height="1.300" fill="#20c020"/><rect x="4.400" y="3.700" width="1" height="1" fill="#d83a3a"/></svg>
<span class="t" style="left:278.80px;top:76.15px;font-size:7.9px;color:#111;font-weight:bold;transform:scaleX(0.9245);">Ethernet</span>
<svg class="a" style="left:314.60px;top:79.40px" width="5.4" height="5.2" viewBox="0 0 5.4 5.2"><path d="M.6.6 4.8 4.6M4.8.6.6 4.6" stroke="#111" stroke-width="1.45"/></svg>
<div class="a" style="left:333.90px;top:113.00px;width:0.70px;height:353.00px;background:#c4c4c4;"></div>
<svg class="a" style="left:212.00px;top:112.00px" width="124" height="120" viewBox="0 0 124 120"><path d="M2.6 1.2H122.4V118H40L.6 112.8V1.2z" fill="#f0f0f0" stroke="#bdbdbd" stroke-width=".7"/></svg>
<div class="a" style="left:212.60px;top:92.50px;width:2.30px;height:20.70px;background:#0a72d6;"></div>
<div class="a" style="left:212.60px;top:113.40px;width:2.30px;height:105.80px;background:#62aef2;"></div>
<div class="a" style="left:229.00px;top:134.00px;width:89.60px;height:0.80px;background:#fbfbfb;"></div>
<div class="a" style="left:229.00px;top:155.20px;width:89.60px;height:0.80px;background:#fbfbfb;"></div>
<div class="a" style="left:229.00px;top:176.40px;width:89.60px;height:0.80px;background:#fbfbfb;"></div>
<div class="a" style="left:229.00px;top:198.00px;width:89.60px;height:0.80px;background:#fbfbfb;"></div>
<div class="a" style="left:229.00px;top:219.20px;width:89.60px;height:0.80px;background:#fbfbfb;"></div>
<div class="a" style="left:212.60px;top:134.30px;width:2.30px;height:0.60px;background:#f0f0f0;"></div>
<div class="a" style="left:212.60px;top:155.30px;width:2.30px;height:0.60px;background:#f0f0f0;"></div>
<div class="a" style="left:212.60px;top:176.50px;width:2.30px;height:0.60px;background:#f0f0f0;"></div>
<div class="a" style="left:212.60px;top:197.60px;width:2.30px;height:0.60px;background:#f0f0f0;"></div>
<span class="t" style="left:219.00px;top:96.85px;font-size:7.8px;color:#2a2a2a;transform:scaleX(0.8818);-webkit-text-stroke:.1px;">Allgemein</span>
<span class="t" style="left:219.00px;top:118.45px;font-size:7.8px;color:#2a2a2a;transform:scaleX(0.8742);-webkit-text-stroke:.1px;">Ethernet Device E/A-Abbild</span>
<span class="t" style="left:219.00px;top:139.65px;font-size:7.8px;color:#2a2a2a;transform:scaleX(0.8631);-webkit-text-stroke:.1px;">Ethernet Device IEC-Objekte</span>
<span class="t" style="left:219.00px;top:160.65px;font-size:7.8px;color:#2a2a2a;transform:scaleX(0.9066);-webkit-text-stroke:.1px;">Log</span>
<span class="t" style="left:219.00px;top:181.85px;font-size:7.8px;color:#2a2a2a;transform:scaleX(0.8503);-webkit-text-stroke:.1px;">Status</span>
<span class="t" style="left:219.00px;top:202.75px;font-size:7.8px;color:#2a2a2a;transform:scaleX(0.9278);-webkit-text-stroke:.1px;">Information</span>
<span class="t" style="left:340.90px;top:104.35px;font-size:7.8px;color:#2a2a2a;transform:scaleX(0.8725);-webkit-text-stroke:.1px;">Netzwerkschnittstelle</span>
<span class="t" style="left:340.90px;top:120.25px;font-size:7.8px;color:#2a2a2a;transform:scaleX(0.8632);-webkit-text-stroke:.1px;">IP-Adresse</span>
<span class="t" style="left:340.90px;top:135.75px;font-size:7.8px;color:#2a2a2a;transform:scaleX(0.8434);-webkit-text-stroke:.1px;">Subnetzmaske</span>
<span class="t" style="left:340.90px;top:151.65px;font-size:7.8px;color:#2a2a2a;transform:scaleX(0.8675);-webkit-text-stroke:.1px;">Standard-Gateway</span>
<div class="a" style="left:410.00px;top:103.30px;width:121.50px;height:13.00px;background:#fff;border:.8px solid #a0a0a0;"></div>
<span class="t" style="left:411.80px;top:104.55px;font-size:7.5px;color:#111;transform:scaleX(0.7993);-webkit-text-stroke:.1px;">LAN1</span>
<div class="a" style="left:534.20px;top:104.20px;width:37.60px;height:12.80px;background:#e3e3e3;border:1px solid #0078d7;"></div>
<span class="t" style="left:539.60px;top:104.95px;font-size:7.8px;color:#111;transform:scaleX(0.8246);-webkit-text-stroke:.1px;">Browse...</span>
<div class="a" style="left:410.00px;top:119.50px;width:83.80px;height:11.80px;background:#fff;border:.8px solid #b0b0b0;"></div>
<span class="t" style="left:416.08px;top:120.05px;font-size:7.5px;color:#1a1a1a;transform:scaleX(0.8749);-webkit-text-stroke:.1px;">10</span>
<div class="a" style="left:430.05px;top:127.20px;width:0.80px;height:0.80px;background:#333;"></div>
<span class="t" style="left:435.78px;top:120.05px;font-size:7.5px;color:#1a1a1a;transform:scaleX(0.8629);-webkit-text-stroke:.1px;">190</span>
<div class="a" style="left:451.50px;top:127.20px;width:0.80px;height:0.80px;background:#333;"></div>
<span class="t" style="left:458.98px;top:120.05px;font-size:7.5px;color:#1a1a1a;transform:scaleX(0.8749);-webkit-text-stroke:.1px;">63</span>
<div class="a" style="left:472.95px;top:127.20px;width:0.80px;height:0.80px;background:#333;"></div>
<span class="t" style="left:478.68px;top:120.05px;font-size:7.5px;color:#1a1a1a;transform:scaleX(0.8629);-webkit-text-stroke:.1px;">147</span>
<div class="a" style="left:410.00px;top:135.00px;width:83.80px;height:12.00px;background:#fff;border:.8px solid #b0b0b0;"></div>
<span class="t" style="left:414.33px;top:135.65px;font-size:7.5px;color:#1a1a1a;transform:scaleX(0.8629);-webkit-text-stroke:.1px;">255</span>
<div class="a" style="left:430.05px;top:142.80px;width:0.80px;height:0.80px;background:#333;"></div>
<span class="t" style="left:435.78px;top:135.65px;font-size:7.5px;color:#1a1a1a;transform:scaleX(0.8629);-webkit-text-stroke:.1px;">255</span>
<div class="a" style="left:451.50px;top:142.80px;width:0.80px;height:0.80px;background:#333;"></div>
<span class="t" style="left:457.23px;top:135.65px;font-size:7.5px;color:#1a1a1a;transform:scaleX(0.8629);-webkit-text-stroke:.1px;">248</span>
<div class="a" style="left:472.95px;top:142.80px;width:0.80px;height:0.80px;background:#333;"></div>
<span class="t" style="left:482.18px;top:135.65px;font-size:7.5px;color:#1a1a1a;transform:scaleX(0.9109);-webkit-text-stroke:.1px;">0</span>
<div class="a" style="left:410.00px;top:151.30px;width:83.80px;height:11.90px;background:#fff;border:.8px solid #b0b0b0;"></div>
<span class="t" style="left:416.08px;top:151.90px;font-size:7.5px;color:#1a1a1a;transform:scaleX(0.8749);-webkit-text-stroke:.1px;">10</span>
<div class="a" style="left:430.05px;top:159.05px;width:0.80px;height:0.80px;background:#333;"></div>
<span class="t" style="left:435.78px;top:151.90px;font-size:7.5px;color:#1a1a1a;transform:scaleX(0.8629);-webkit-text-stroke:.1px;">190</span>
<div class="a" style="left:451.50px;top:159.05px;width:0.80px;height:0.80px;background:#333;"></div>
<span class="t" style="left:458.98px;top:151.90px;font-size:7.5px;color:#1a1a1a;transform:scaleX(0.8749);-webkit-text-stroke:.1px;">56</span>
<div class="a" style="left:472.95px;top:159.05px;width:0.80px;height:0.80px;background:#333;"></div>
<span class="t" style="left:482.18px;top:151.90px;font-size:7.5px;color:#1a1a1a;transform:scaleX(0.9109);-webkit-text-stroke:.1px;">1</span>
<div class="a" style="left:341.20px;top:170.00px;width:7.60px;height:7.60px;background:#fff;border:.6px solid #5c5c5c;"></div>
<span class="t" style="left:351.60px;top:168.05px;font-size:7.8px;color:#2a2a2a;transform:scaleX(0.8636);-webkit-text-stroke:.1px;">Einstellungen des Betriebssystems anpassen</span>
<div class="a" style="left:250.50px;top:222.00px;width:422.50px;height:218.40px;background:#f0f0f0;border:.7px solid #8a8a8a;box-shadow:0 1px 5px rgba(0,0,0,.35);"></div>
<div class="a" style="left:251.20px;top:222.70px;width:421.10px;height:17.30px;background:#ffffff;"></div>
<span class="t" style="left:256.30px;top:225.75px;font-size:8.0px;color:#111;transform:scaleX(0.8796);-webkit-text-stroke:.06px;">Netzwerkadapter</span>
<svg class="a" style="left:660.00px;top:227.60px" width="7" height="7" viewBox="0 0 7 7"><path d="M.4.4 6.6 6.6M6.6.4.4 6.6" stroke="#222" stroke-width=".7"/></svg>
<span class="t" style="left:259.50px;top:244.05px;font-size:7.5px;color:#111;transform:scaleX(0.9079);-webkit-text-stroke:.06px;">Schnittstellen</span>
<div class="a" style="left:258.30px;top:256.40px;width:407.20px;height:86.00px;background:#ababab;border:1px solid #3a3a3a;"></div>
<div class="a" style="left:259.30px;top:257.40px;width:405.20px;height:11.40px;background:#ffffff;"></div>
<div class="a" style="left:259.30px;top:268.40px;width:405.20px;height:0.60px;background:#c8c8c8;"></div>
<div class="a" style="left:259.30px;top:269.00px;width:405.20px;height:13.00px;background:#ffffff;"></div>
<div class="a" style="left:259.30px;top:282.00px;width:405.20px;height:13.50px;background:#0078d7;"></div>
<div class="a" style="left:259.30px;top:295.50px;width:405.20px;height:13.30px;background:#ffffff;"></div>
<div class="a" style="left:294.70px;top:257.40px;width:0.60px;height:51.40px;background:#c4c4c4;"></div>
<div class="a" style="left:353.70px;top:257.40px;width:0.60px;height:51.40px;background:#c4c4c4;"></div>
<div class="a" style="left:259.30px;top:281.70px;width:405.20px;height:0.50px;background:#d0d0d0;"></div>
<div class="a" style="left:259.30px;top:308.50px;width:405.20px;height:0.50px;background:#909090;"></div>
<span class="t" style="left:264.50px;top:257.55px;font-size:7.5px;color:#111;transform:scaleX(0.8144);-webkit-text-stroke:.06px;">Name</span>
<span class="t" style="left:300.00px;top:257.55px;font-size:7.5px;color:#111;transform:scaleX(0.8458);-webkit-text-stroke:.06px;">Beschreibung</span>
<span class="t" style="left:358.30px;top:257.55px;font-size:7.5px;color:#111;transform:scaleX(0.8219);-webkit-text-stroke:.06px;">IP-Adresse</span>
<span class="t" style="left:261.30px;top:270.25px;font-size:7.5px;color:#111;transform:scaleX(0.7358);-webkit-text-stroke:.06px;">lo</span>
<span class="t" style="left:356.30px;top:270.25px;font-size:7.5px;color:#111;transform:scaleX(0.8535);-webkit-text-stroke:.06px;">127.0.0.1</span>
<span class="t" style="left:261.80px;top:283.75px;font-size:7.5px;color:#fff;transform:scaleX(0.8366);-webkit-text-stroke:.06px;">LAN1</span>
<span class="t" style="left:356.30px;top:283.75px;font-size:7.5px;color:#fff;transform:scaleX(0.8693);-webkit-text-stroke:.06px;">10.190.63.147</span>
<span class="t" style="left:261.20px;top:297.05px;font-size:7.5px;color:#111;transform:scaleX(0.8653);-webkit-text-stroke:.06px;">sit0</span>
<span class="t" style="left:356.30px;top:297.05px;font-size:7.5px;color:#111;transform:scaleX(0.8719);-webkit-text-stroke:.06px;">0.0.0.0</span>
<span class="t" style="left:259.90px;top:347.85px;font-size:7.5px;color:#111;transform:scaleX(0.9081);-webkit-text-stroke:.06px;">IP-Adresse</span>
<span class="t" style="left:259.90px;top:363.75px;font-size:7.5px;color:#111;transform:scaleX(0.8927);-webkit-text-stroke:.06px;">Subnetzmaske</span>
<span class="t" style="left:259.90px;top:379.55px;font-size:7.5px;color:#111;transform:scaleX(0.8809);-webkit-text-stroke:.06px;">Standard-Gateway</span>
<span class="t" style="left:259.90px;top:395.75px;font-size:7.5px;color:#111;transform:scaleX(0.8932);-webkit-text-stroke:.06px;">MAC-Adresse</span>
<div class="a" style="left:329.00px;top:347.30px;width:82.00px;height:12.00px;background:#f0f0f0;border:.8px solid #b4b4b4;"></div>
<span class="t" style="left:334.85px;top:347.95px;font-size:7.5px;color:#222;transform:scaleX(0.8749);-webkit-text-stroke:.06px;">10</span>
<div class="a" style="left:348.60px;top:355.10px;width:0.80px;height:0.80px;background:#333;"></div>
<span class="t" style="left:354.10px;top:347.95px;font-size:7.5px;color:#222;transform:scaleX(0.8629);-webkit-text-stroke:.06px;">190</span>
<div class="a" style="left:369.60px;top:355.10px;width:0.80px;height:0.80px;background:#333;"></div>
<span class="t" style="left:376.85px;top:347.95px;font-size:7.5px;color:#222;transform:scaleX(0.8749);-webkit-text-stroke:.06px;">63</span>
<div class="a" style="left:390.60px;top:355.10px;width:0.80px;height:0.80px;background:#333;"></div>
<span class="t" style="left:396.10px;top:347.95px;font-size:7.5px;color:#222;transform:scaleX(0.8629);-webkit-text-stroke:.06px;">147</span>
<div class="a" style="left:329.00px;top:363.40px;width:82.00px;height:11.50px;background:#f0f0f0;border:.8px solid #b4b4b4;"></div>
<span class="t" style="left:333.10px;top:363.80px;font-size:7.5px;color:#222;transform:scaleX(0.8629);-webkit-text-stroke:.06px;">255</span>
<div class="a" style="left:348.60px;top:370.95px;width:0.80px;height:0.80px;background:#333;"></div>
<span class="t" style="left:354.10px;top:363.80px;font-size:7.5px;color:#222;transform:scaleX(0.8629);-webkit-text-stroke:.06px;">255</span>
<div class="a" style="left:369.60px;top:370.95px;width:0.80px;height:0.80px;background:#333;"></div>
<span class="t" style="left:375.10px;top:363.80px;font-size:7.5px;color:#222;transform:scaleX(0.8629);-webkit-text-stroke:.06px;">248</span>
<div class="a" style="left:390.60px;top:370.95px;width:0.80px;height:0.80px;background:#333;"></div>
<span class="t" style="left:399.60px;top:363.80px;font-size:7.5px;color:#222;transform:scaleX(0.9109);-webkit-text-stroke:.06px;">0</span>
<div class="a" style="left:329.00px;top:379.20px;width:82.00px;height:11.60px;background:#f0f0f0;border:.8px solid #b4b4b4;"></div>
<span class="t" style="left:334.85px;top:379.65px;font-size:7.5px;color:#222;transform:scaleX(0.8749);-webkit-text-stroke:.06px;">10</span>
<div class="a" style="left:348.60px;top:386.80px;width:0.80px;height:0.80px;background:#333;"></div>
<span class="t" style="left:354.10px;top:379.65px;font-size:7.5px;color:#222;transform:scaleX(0.8629);-webkit-text-stroke:.06px;">190</span>
<div class="a" style="left:369.60px;top:386.80px;width:0.80px;height:0.80px;background:#333;"></div>
<span class="t" style="left:376.85px;top:379.65px;font-size:7.5px;color:#222;transform:scaleX(0.8749);-webkit-text-stroke:.06px;">56</span>
<div class="a" style="left:390.60px;top:386.80px;width:0.80px;height:0.80px;background:#333;"></div>
<span class="t" style="left:399.60px;top:379.65px;font-size:7.5px;color:#222;transform:scaleX(0.9109);-webkit-text-stroke:.06px;">1</span>
<div class="a" style="left:324.30px;top:395.20px;width:82.30px;height:11.90px;background:#f0f0f0;border:.8px solid #a0a0a0;"></div>
<span class="t" style="left:326.40px;top:395.75px;font-size:7.5px;color:#222;transform:scaleX(0.8451);-webkit-text-stroke:.06px;">50:2D:F4:13:F7:7F</span>
<div class="a" style="left:571.20px;top:419.10px;width:44.40px;height:12.80px;background:#e1e1e1;border:1.2px solid #0078d7;"></div>
<span class="t" style="left:588.60px;top:420.15px;font-size:7.9px;color:#111;transform:scaleX(0.9293);-webkit-text-stroke:.06px;">OK</span>
<div class="a" style="left:620.40px;top:419.20px;width:44.10px;height:12.60px;background:#e1e1e1;border:.8px solid #adadad;"></div>
<span class="t" style="left:626.60px;top:420.15px;font-size:7.5px;color:#111;transform:scaleX(0.8765);-webkit-text-stroke:.06px;">Abbrechen</span>
<svg class="a" style="left:666.60px;top:434.40px" width="4.6" height="4.6" viewBox="0 0 4.6 4.6"><path d="M4 1v0M4 2.5v0M2.5 2.5v0M4 4v0M2.5 4v0M1 4v0" stroke="#a0a0a0" stroke-width=".9" stroke-linecap="square"/></svg>
</div></div>
</body></html>
